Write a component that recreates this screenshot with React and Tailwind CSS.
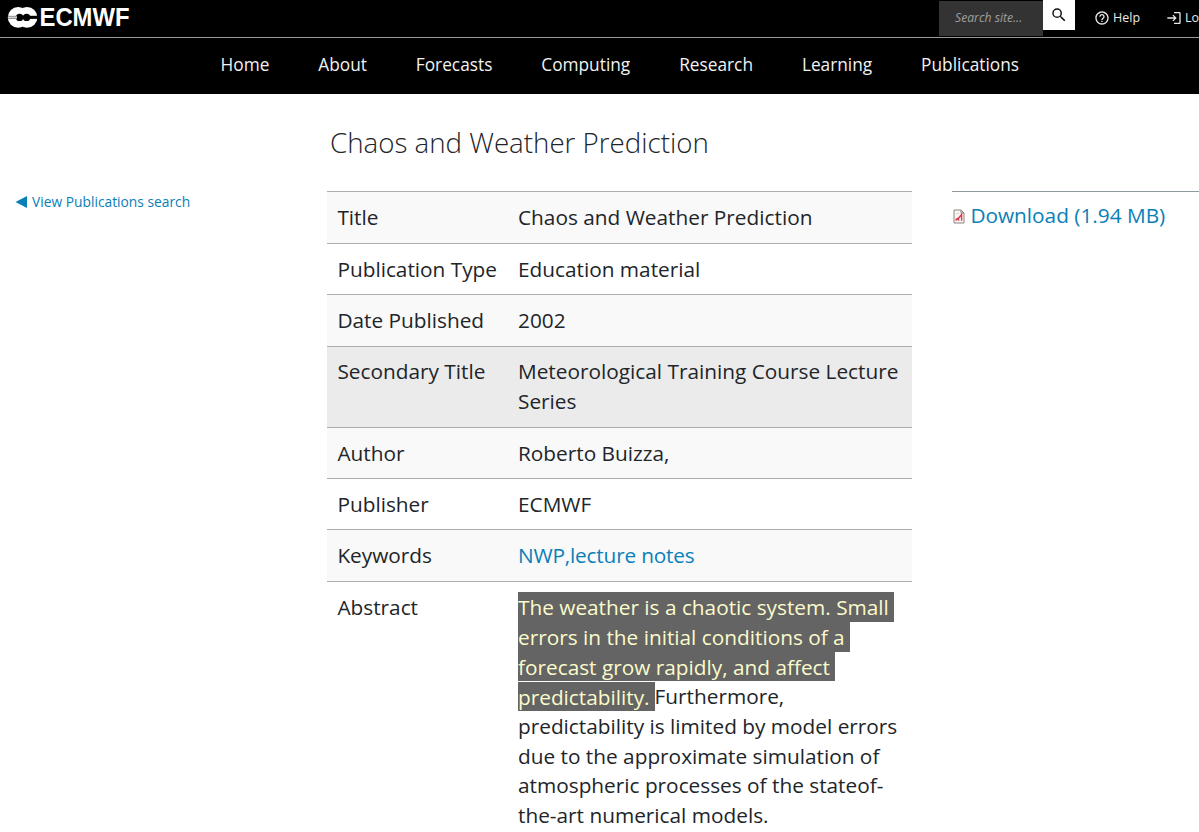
const navItems = [
  "Home",
  "About",
  "Forecasts",
  "Computing",
  "Research",
  "Learning",
  "Publications",
];

const rows = [
  { label: "Title", value: "Chaos and Weather Prediction", bg: "bg-[#f9f9f9]" },
  { label: "Publication Type", value: "Education material", bg: "bg-white" },
  { label: "Date Published", value: "2002", bg: "bg-[#f9f9f9]" },
  {
    label: "Secondary Title",
    value: "Meteorological Training Course Lecture Series",
    bg: "bg-[#ebebeb]",
  },
  { label: "Author", value: "Roberto Buizza,", bg: "bg-[#f9f9f9]" },
  { label: "Publisher", value: "ECMWF", bg: "bg-white" },
  {
    label: "Keywords",
    value: (
      <a href="#" className="tracking-[-0.18px] text-[#0a80b8]">
        NWP,lecture notes
      </a>
    ),
    bg: "bg-[#f9f9f9]",
  },
  {
    label: "Abstract",
    value: (
      <>
        <mark className="bg-[#646464] box-decoration-clone pt-[0.6px] pr-[5px] pb-[1.2px] text-[#fbfbcb]">
          The weather is a chaotic system. Small errors in the initial
          conditions of a forecast grow rapidly, and affect predictability.
        </mark>
        Furthermore, predictability is limited by model errors due to the
        approximate simulation of atmospheric processes of the stateof-
        <wbr />
        the-art numerical models.
      </>
    ),
    bg: "bg-white",
  },
];

function Logo() {
  return (
    <svg className="block h-9 w-[140px]" viewBox="0 0 140 36">
      {/* Two linked rings with a channel opening to the right */}
      <circle cx="18.2" cy="17.4" r="10.4" fill="#fff" />
      <circle cx="27" cy="17.4" r="10.4" fill="#fff" />
      <path d="M21.2 5.5h2.8l-1.4 3zM21.2 29.3h2.8l-1.4-3z" fill="#000" />
      <circle cx="19.6" cy="17.4" r="3.7" fill="#000" />
      <circle cx="26.6" cy="17.4" r="3.7" fill="#000" />
      <path d="M22 15.8h16v3.1H22z" fill="#000" />
      <path d="M8 15.8h9v3.1H8z" fill="#888" />
      <path d="M8 16.7h9v1.3H8z" fill="#d5d5d5" />
      <text
        x="39.5"
        y="26"
        fill="#fff"
        fontFamily="Liberation Sans, Arial, sans-serif"
        fontWeight="700"
        fontSize="25"
        textLength="90"
        lengthAdjust="spacingAndGlyphs"
      >
        ECMWF
      </text>
    </svg>
  );
}

function TopBar() {
  return (
    <div className="flex h-[37px] items-start justify-between">
      <a href="#" title="ECMWF">
        <Logo />
      </a>
      <div className="flex h-[36px] w-[260px] shrink-0 items-start overflow-hidden text-[12.5px] text-[#e8e8e8]">
        <div className="mt-px flex h-[35px] w-[104px] shrink-0 items-center bg-[#333] pl-4 text-[12.2px] text-[#a0a0a0] italic">
          Search site...
        </div>
        <button className="flex h-[30px] w-[32px] shrink-0 items-center justify-center bg-white pb-px">
          <svg className="h-[18px] w-[18px]" viewBox="0 0 24 24" fill="#111">
            <path d="M15.5 14h-.79l-.28-.27A6.47 6.47 0 0 0 16 9.5 6.5 6.5 0 1 0 9.5 16c1.61 0 3.09-.59 4.23-1.57l.27.28v.79l5 4.99L20.49 19l-4.99-5zm-6 0a4.5 4.5 0 1 1 0-9 4.5 4.5 0 0 1 0 9z" />
          </svg>
        </button>
        <a href="#" className="ml-[19px] flex h-9 shrink-0 items-center gap-[3px]">
          <svg className="h-4 w-4" viewBox="0 0 24 24" fill="currentColor">
            <path d="M11 18h2v-2h-2v2zm1-16C6.48 2 2 6.48 2 12s4.48 10 10 10 10-4.48 10-10S17.52 2 12 2zm0 18c-4.41 0-8-3.59-8-8s3.59-8 8-8 8 3.59 8 8-3.59 8-8 8zm0-14c-2.21 0-4 1.79-4 4h2c0-1.1.9-2 2-2s2 .9 2 2c0 2-3 1.75-3 5h2c0-2.25 3-2.5 3-5 0-2.21-1.79-4-4-4z" />
          </svg>
          Help
        </a>
        <a href="#" className="ml-[26px] flex h-9 shrink-0 items-center gap-[3px]">
          <svg className="h-4 w-4" viewBox="0 0 24 24" fill="currentColor">
            <path d="M11 7 9.6 8.4l2.6 2.6H2v2h10.2l-2.6 2.6L11 17l5-5-5-5zm9 12h-8v2h8c1.1 0 2-.9 2-2V5c0-1.1-.9-2-2-2h-8v2h8v14z" />
          </svg>
          Lo
        </a>
      </div>
    </div>
  );
}

function PdfIcon() {
  return (
    <svg className="mt-[6px] ml-px h-[15px] w-[13px] shrink-0" viewBox="0 0 13 15">
      <path d="M1 1h7l3 3v10H1z" fill="#f8f6f4" stroke="#8b8580" />
      <path d="M8 1v3h3" fill="none" stroke="#8b8580" />
      <path d="M3 4.5h3" stroke="#d5d1ce" />
      <path
        d="M3.2 11.8V9.6M3.2 10.4C5.500 9.500 7 8 8.600 5.500V11.800M5.600 9.500v2.200"
        fill="none"
        stroke="#dd4054"
        strokeWidth="1.4"
      />
    </svg>
  );
}

function App() {
  return (
    <div className="h-[832px] w-full overflow-hidden bg-white font-['Open_Sans',sans-serif] text-[#212529]">
      <header className="bg-black">
        <TopBar />
        <nav className="flex h-[57px] items-center gap-[48.9px] border-t border-[#999] pl-[220.5px] text-[17.3px] text-[#f2f2f2]">
          {navItems.map((item) => (
            <a key={item} href="#" className="pb-[1.6px] whitespace-nowrap">
              {item}
            </a>
          ))}
        </nav>
      </header>

      <div className="flex">
        <aside className="w-[327.4px] shrink-0 pt-[97px] pl-[15px]">
          <a
            href="#"
            className="flex items-center gap-[5px] text-[13.8px] leading-[21px] text-[#0a80b8]"
          >
            <svg className="h-3 w-3" viewBox="0 0 12 12" fill="currentColor">
              <path d="M0.5 6 12 0v12z" />
            </svg>
            View Publications search
          </a>
        </aside>

        <main className="w-[585px] shrink-0">
          <h1 className="h-[97.4px] pt-[30px] pl-[2.6px] text-[27.7px] leading-[36px] font-light whitespace-nowrap">
            Chaos and Weather Prediction
          </h1>
          {rows.map((row) => (
            <div
              key={row.label}
              className={`flex border-t border-[#aaaeb1] pt-[10.9px] pb-[9.7px] text-[20.8px] leading-[29.8px] ${row.bg}`}
            >
              <div className="w-[190.6px] shrink-0 pl-2.5 whitespace-nowrap">
                {row.label}
              </div>
              <div className="w-[386px]">{row.value}</div>
            </div>
          ))}
        </main>

        <aside className="ml-10 flex-1 pt-[97px]">
          <div className="flex border-t border-[#8f9a9e] pt-[11px] text-[20.8px] leading-6 text-[#0a80b8]">
            <PdfIcon />
            <a href="#" className="ml-[4px] whitespace-nowrap">
              Download (1.94 MB)
            </a>
          </div>
        </aside>
      </div>
    </div>
  );
}

export default App;
